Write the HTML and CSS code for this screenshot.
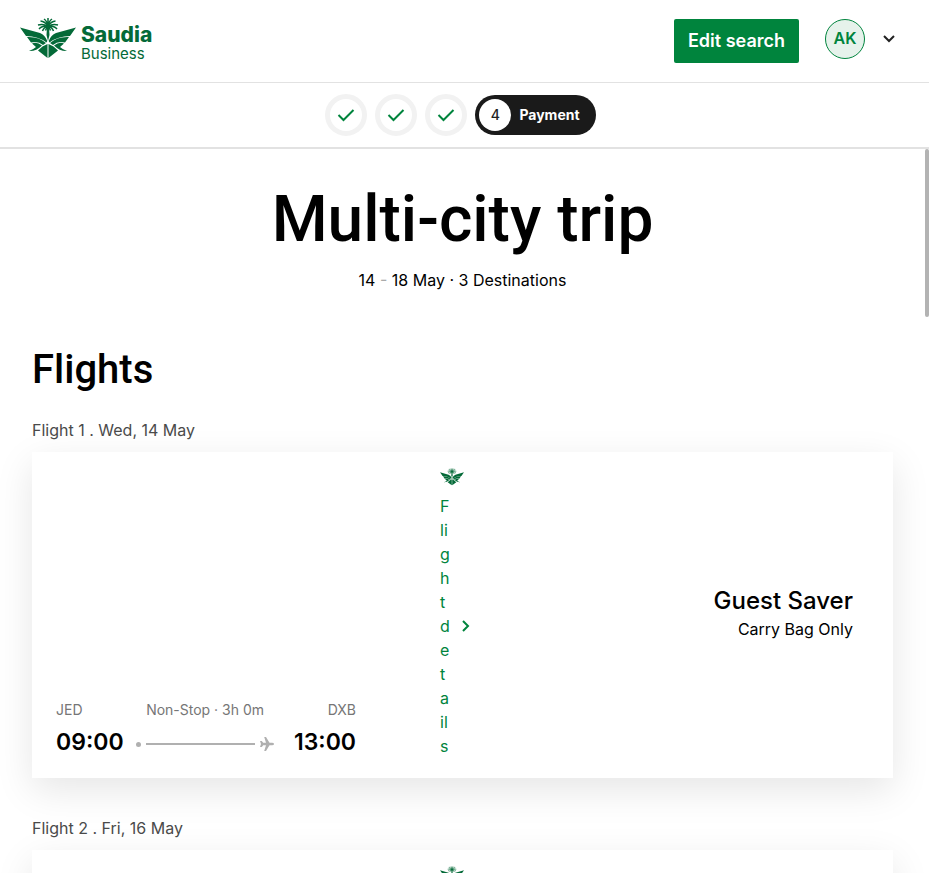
FILE: index.html
```html
<!DOCTYPE html>
<html lang="en">
<head>
<meta charset="utf-8">
<meta name="viewport" content="width=device-width, initial-scale=1">
<title>Multi-city trip – Payment</title>
<link rel="stylesheet" href="styles.css">
</head>
<body>
<svg class="defs" aria-hidden="true">
  <symbol id="emblem" viewBox="0 0 56 41">
    <path d="M0 9.500 L20 15 Q25 17 27.300 23 L26.500 24.500 Q18 18 6 18 Z"/>
    <path d="M56 9.500 L36 15 Q31 17 28.700 23 L29.500 24.500 Q38 18 50 18 Z"/>
    <path d="M7 19 Q19 18.500 26 25 L23 27 Q18 22.500 11 24.500 Z"/>
    <path d="M49 19 Q37 18.500 30 25 L33 27 Q38 22.500 45 24.500 Z"/>
    <path d="M12 25.500 Q17 23.500 22 27.500 Q16 33.500 9 33 Q14 31 16 29 Z"/>
    <path d="M44 25.500 Q39 23.500 34 27.500 Q40 33.500 47 33 Q42 31 40 29 Z"/>
    <path d="M22.500 28.500 L27.500 26 V40 L18 32.500 Z M33.500 28.500 L28.500 26 V40 L38 32.500 Z"/>
    <path d="M27 8 H29 L29.500 17 L28 23 L26.500 17 Z"/>
    <g fill="none" stroke="currentColor" stroke-width="1.500">
      <path d="M28 8 V0 M28 8 Q27 3 24 1 M28 8 Q29 3 32 1 M28 8 Q25 3.500 20.500 3 M28 8 Q31 3.500 35.500 3"/>
      <path d="M28 8 Q23 5.500 18 7 M28 8 Q33 5.500 38 7 M28 8 Q22 7.500 19 11 M28 8 Q34 7.500 37 11"/>
      <path d="M28 8 Q24 9 22.500 13 M28 8 Q32 9 33.500 13 M27.500 8 L25.500 12.500 M28.500 8 L30.500 12.500"/>
    </g>
  </symbol>
  <symbol id="check" viewBox="0 0 18 14"><path d="M1.500 7 L6.500 12 L16.500 2" fill="none" stroke="currentColor" stroke-width="2"/></symbol>
  <symbol id="plane" viewBox="0 0 14 14"><path d="M14 7 Q14 5.700 12 5.700 H9.500 L6 0 H4.200 L6 5.700 H3.200 L1.800 4 H0 L1 7 L0 10 H1.800 L3.200 8.300 H6 L4.200 14 H6 L9.500 8.300 H12 Q14 8.300 14 7 Z"/></symbol>
</svg>

<header class="topbar">
  <a class="brand" href="#" aria-label="Saudia Business">
    <svg class="brand-emblem" aria-hidden="true"><use href="#emblem"/></svg>
    <span class="brand-text"><span class="brand-name">Saudia</span><span class="brand-sub">Business</span></span>
  </a>
  <div class="account">
    <button class="edit" type="button">Edit search</button>
    <button class="profile" type="button" aria-label="Account menu">
      <span class="avatar">AK</span>
      <svg class="caret" viewBox="0 0 12 8" aria-hidden="true"><path d="M1 1 L6 6 L11 1" fill="none" stroke="currentColor" stroke-width="2"/></svg>
    </button>
  </div>
</header>

<nav class="steps" aria-label="Booking progress">
  <span class="step"><svg aria-hidden="true"><use href="#check"/></svg></span>
  <span class="step"><svg aria-hidden="true"><use href="#check"/></svg></span>
  <span class="step"><svg aria-hidden="true"><use href="#check"/></svg></span>
  <span class="current"><span class="number">4</span>Payment</span>
</nav>

<div class="viewport">
  <main class="content">
    <h1>Multi-city trip</h1>
    <p class="summary">14 <span class="dash">-</span> 18 May · 3 Destinations</p>
    <h2>Flights</h2>

    <section class="flight">
      <h3>Flight 1 . Wed, 14 May</h3>
      <article class="card">
        <div class="route">
          <div class="labels"><span>JED</span><span>Non-Stop · 3h 0m</span><span>DXB</span></div>
          <div class="times"><strong>09:00</strong><span class="path"><i class="dot"></i><i class="line"></i><svg aria-hidden="true"><use href="#plane"/></svg></span><strong>13:00</strong></div>
        </div>
        <div class="carrier">
          <svg class="carrier-emblem" aria-hidden="true"><use href="#emblem"/></svg>
          <a class="details" href="#"><span>Flight details</span><svg viewBox="0 0 8 12" aria-hidden="true"><path d="M1 1 L6 6 L1 11" fill="none" stroke="currentColor" stroke-width="2"/></svg></a>
        </div>
        <div class="fare"><strong>Guest Saver</strong><span>Carry Bag Only</span></div>
      </article>
    </section>

    <section class="flight">
      <h3>Flight 2 . Fri, 16 May</h3>
      <article class="card">
        <div class="route"></div>
        <div class="carrier">
          <svg class="carrier-emblem" aria-hidden="true"><use href="#emblem"/></svg>
        </div>
        <div class="fare"></div>
      </article>
    </section>
  </main>
  <div class="thumb"></div>
</div>
</body>
</html>
```
FILE: styles.css
```css
* { box-sizing: border-box; }
body {
  margin: 0;
  height: 100vh;
  overflow: hidden;
  display: flex;
  flex-direction: column;
  font-family: Inter, "Liberation Sans", sans-serif;
  font-size: 16px;
  line-height: 24px;
  color: #000;
  background: #fff;
}
button { font: inherit; border: 0; padding: 0; background: none; cursor: pointer; }
a { text-decoration: none; }
h1, h2, h3, p { margin: 0; }
.defs { position: absolute; width: 0; height: 0; }

.topbar {
  flex: none;
  display: flex;
  justify-content: space-between;
  align-items: center;
  height: 83px;
  padding: 0 34px 0 20px;
  border-bottom: 1px solid #e2e2e2;
}
.brand { display: flex; align-items: flex-start; gap: 5px; padding-bottom: 2px; color: #046a38; fill: currentColor; }
.brand-emblem { width: 56px; height: 41px; }
.brand-text { display: flex; flex-direction: column; padding-top: 7px; }
.brand-name { font-size: 21px; line-height: 20px; font-weight: 800; }
.brand-sub { font-size: 15px; line-height: 18px; }
.account { display: flex; align-items: flex-start; gap: 26px; }
.edit {
  height: 44px;
  padding: 0 14px;
  border-radius: 2px;
  background: #00843d;
  color: #fff;
  font-size: 18px;
  font-weight: 600;
}
.profile { display: flex; align-items: center; gap: 18px; color: #222; }
.avatar {
  width: 40px;
  height: 40px;
  border: 1px solid #00843d;
  border-radius: 50%;
  background: #e6f2eb;
  color: #00843d;
  font-weight: 600;
  line-height: 36px;
}
.caret { width: 12px; height: 8px; }

.steps {
  flex: none;
  display: flex;
  justify-content: center;
  align-items: center;
  gap: 8px;
  height: 66px;
  padding-right: 8px;
  border-bottom: 2px solid #e2e2e2;
}
.step {
  display: flex;
  align-items: center;
  justify-content: center;
  width: 42px;
  height: 42px;
  border: 5px solid #f2f2f2;
  border-radius: 50%;
  color: #00843d;
}
.step svg { width: 18px; height: 14px; }
.current {
  display: flex;
  align-items: center;
  gap: 8px;
  height: 40px;
  padding: 0 16px 0 4px;
  border-radius: 20px;
  background: #1a1a1a;
  color: #fff;
  font-size: 14px;
  font-weight: 700;
}
.number {
  width: 32px;
  height: 32px;
  border-radius: 50%;
  background: #fff;
  color: #222;
  font-weight: 500;
  line-height: 32px;
  text-align: center;
}

.viewport { flex: 1; min-height: 0; overflow: hidden; position: relative; }
.thumb { position: absolute; top: 0; right: 0; width: 4px; height: 168px; border-radius: 2px; background: #b3b3b3; }
.content { padding: 33px 36px 0 32px; }
h1, h2 { font-family: Roboto, Inter, sans-serif; font-weight: 500; }
h1 { font-size: 64px; line-height: 76px; text-align: center; }
.summary { margin-top: 10px; text-align: center; }
.dash { color: #aaa; }
h2 { margin-top: 50px; font-size: 40px; line-height: 56px; }
h3 { font-size: 16px; line-height: 24px; font-weight: 400; color: #4a4a4a; }
.flight { margin-top: 20px; }
.flight + .flight { margin-top: 38px; }
.card {
  display: grid;
  grid-template-columns: 300px 32px 1fr;
  column-gap: 84px;
  min-height: 326px;
  margin-top: 10px;
  padding: 16px 40px 20px 24px;
  background: #fff;
  box-shadow: 0 12px 36px rgba(0, 0, 0, .1);
}
.route { align-self: end; }
.labels { display: flex; justify-content: space-between; font-size: 14px; color: #767676; }
.times { display: flex; justify-content: space-between; align-items: center; margin-top: 4px; }
.times strong { font-size: 23px; line-height: 32px; font-weight: 600; }
.path { flex: 1; display: flex; align-items: center; gap: 5px; padding: 4px 20px 0 12px; fill: #b0b0b0; }
.path svg { width: 14px; height: 14px; }
.dot { width: 5px; height: 5px; border-radius: 50%; background: #b0b0b0; }
.line { flex: 1; height: 2px; background: #b0b0b0; }
.carrier { display: flex; flex-direction: column; }
.carrier-emblem { width: 24px; height: 18px; color: #046a38; fill: currentColor; }
.details { display: flex; align-items: center; gap: 12px; margin-top: 8px; color: #00843d; }
.details span { width: 10px; overflow-wrap: anywhere; }
.details svg { flex: none; width: 8px; height: 12px; }
.fare { align-self: center; display: flex; flex-direction: column; text-align: right; }
.fare strong { font-size: 24px; line-height: 32px; font-weight: 500; }
```
